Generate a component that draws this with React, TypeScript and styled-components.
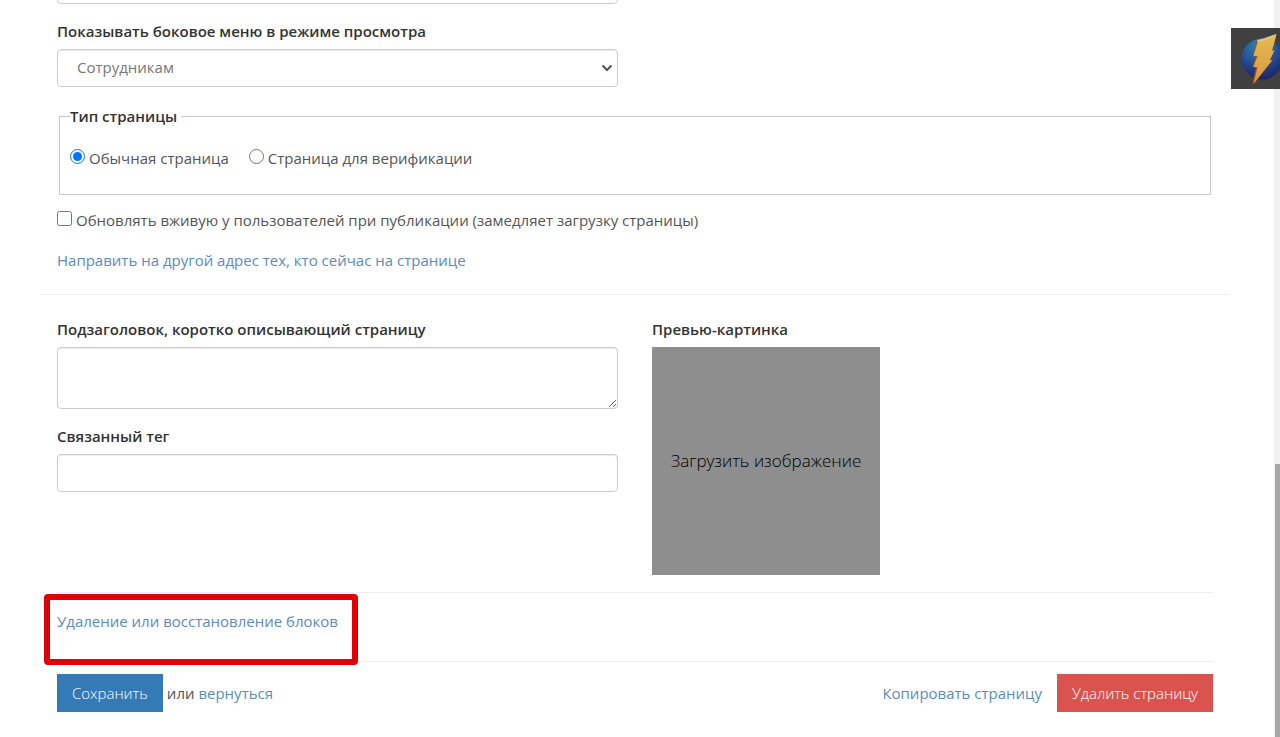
import React from "react";
import styled, { createGlobalStyle } from "styled-components";

const GlobalStyle = createGlobalStyle`
  *, *::before, *::after { box-sizing: border-box; }
  body {
    margin: 0;
    background: #fff;
    color: #555;
    font-family: "Open Sans", "Noto Sans", sans-serif;
    font-size: 15px;
    font-weight: 400;
    line-height: 22px;
  }
  button, input, select, textarea { font: inherit; color: inherit; }
`;

const Shell = styled.div`
  display: grid;
  grid-template-columns: minmax(0, 1fr) 6px;
  min-height: 100vh;
`;

const Page = styled.form`
  padding: 0 44px 24px 40px;
`;

const Section = styled.section`
  padding: 0 17px;
`;

const Columns = styled.div`
  display: grid;
  grid-template-columns: 1fr 1fr;
  column-gap: 34px;
`;

const Field = styled.div`
  display: flex;
  flex-direction: column;

  & + & { margin-top: 16px; }
`;

const Label = styled.label`
  font-weight: 600;
  color: #333;
  margin-bottom: 7px;
`;

const controlStyle = `
  width: 100%;
  border: 1px solid #ccc;
  border-radius: 4px;
  background: #fff;
  box-shadow: inset 0 1px 1px rgba(0, 0, 0, 0.075);
`;

const TextInput = styled.input`
  ${controlStyle}
  height: 38px;
  padding: 6px 15px;
`;

const TextArea = styled.textarea`
  ${controlStyle}
  display: block;
  height: 62px;
  padding: 6px 15px;
  resize: vertical;
`;

const ScrolledField = styled.div`
  display: flex;
  align-items: flex-end;
  height: 4px;
  margin-bottom: 16px;
  overflow: hidden;

  ${TextInput} { flex-shrink: 0; }
`;

const SelectBox = styled.div`
  display: grid;
  align-items: center;

  & > * { grid-area: 1 / 1; }
  & > svg {
    justify-self: end;
    margin-right: 5px;
    pointer-events: none;
  }
`;

const Select = styled.select`
  ${controlStyle}
  appearance: none;
  height: 38px;
  padding: 0 32px 2px 19px;
  color: #777;
`;

const Fieldset = styled.fieldset`
  margin: 18px 2px 14px;
  padding: 20px 10px 25px;
  border: 1px solid #c8c8c8;
`;

const Legend = styled.legend`
  padding: 0 4px 0 0;
  font-weight: 600;
  color: #333;
`;

const Options = styled.div`
  display: flex;
  gap: 20px;
`;

const Choice = styled.label`
  display: flex;
  align-items: flex-start;
  gap: 4px;

  input {
    width: 15px;
    height: 15px;
    margin: 2px 0 0;
  }
`;

const Link = styled.a`
  color: #5b8cbb;
  text-decoration: none;
`;

const RedirectRow = styled.div`
  margin-top: 18px;
`;

const Divider = styled.hr<{ $top: number; $bottom: number }>`
  height: 1px;
  margin: ${(p) => p.$top}px 0 ${(p) => p.$bottom}px;
  border: 0;
  background: #eee;
`;

const Upload = styled.button`
  width: 228px;
  height: 228px;
  padding: 0;
  border: 0;
  background: #8e8e8e;
  color: #000;
  font-size: 17px;
  font-weight: 300;
`;

const BlocksRow = styled.div`
  position: relative;
`;

const Highlight = styled.span`
  position: absolute;
  top: -16px;
  left: -13px;
  width: 314px;
  height: 71px;
  border: 6px solid #e00008;
  border-radius: 4px;
  pointer-events: none;
`;

const Footer = styled.footer`
  display: flex;
  justify-content: space-between;
  align-items: center;
`;

const Actions = styled.div<{ $gap: number }>`
  display: flex;
  align-items: center;
  gap: ${(p) => p.$gap}px;
`;

const Button = styled.button<{ $color: string }>`
  height: 38px;
  padding: 0 15px;
  border: 0;
  background: ${(p) => p.$color};
  color: #fff;
  font-weight: 300;
`;

const ScrollTrack = styled.div`
  display: flex;
  align-items: flex-end;
  justify-content: flex-end;
  background: #f1f1f1;
`;

const ScrollThumb = styled.div`
  width: 5px;
  height: 37%;
  background: #a8a8a8;
`;

const BoltButton = styled.button`
  position: fixed;
  top: 28px;
  right: 0;
  width: 49px;
  height: 61px;
  padding: 0;
  border: 0;
  background: #404040;

  svg { display: block; }
`;

function Chevron() {
  return (
    <svg width="12" height="8" viewBox="0 0 12 8" fill="none" aria-hidden="true">
      <path d="M1.5 1.5 6 6l4.500-4.500" stroke="#555" strokeWidth="2" />
    </svg>
  );
}

function Bolt() {
  return (
    <svg width="49" height="61" viewBox="0 0 49 61" aria-hidden="true">
      <defs>
        <radialGradient id="globe" cx="0.42" cy="0.15" r="0.85">
          <stop offset="0" stopColor="#2f87a8" />
          <stop offset="0.5" stopColor="#25549a" />
          <stop offset="1" stopColor="#1f2464" />
        </radialGradient>
        <linearGradient id="bolt" x1="0" y1="0" x2="0" y2="1">
          <stop offset="0" stopColor="#e3bb55" />
          <stop offset="1" stopColor="#d99a3c" />
        </linearGradient>
      </defs>
      <circle cx="31" cy="31" r="20.500" fill="url(#globe)" />
      <path d="M26 12 45.500 6 41 22 43.500 21.500 39 32 42 31.500 23 56 21.500 54.500 25 39.500 21.500 39 25 28 21.500 28.500Z" fill="#a8502b" />
      <path d="M27 13 45.500 6.500 41 23 43.500 22.500 38.500 32.500 41.500 32 23 55 26.500 39 22.500 39 26.500 28 22.500 28Z" fill="url(#bolt)" />
      <path d="M26 12 33 10.500 45 6 43 9 27 14Z" fill="#d6c9a0" />
    </svg>
  );
}

export default function App() {
  return (
    <>
      <GlobalStyle />
      <Shell>
        <Page onSubmit={(e) => e.preventDefault()}>
          <Section>
            <Columns>
              <div>
                <ScrolledField>
                  <TextInput aria-label="Адрес страницы" />
                </ScrolledField>
                <Field>
                  <Label htmlFor="menu">Показывать боковое меню в режиме просмотра</Label>
                  <SelectBox>
                    <Select id="menu" defaultValue="staff">
                      <option value="staff">Сотрудникам</option>
                    </Select>
                    <Chevron />
                  </SelectBox>
                </Field>
              </div>
            </Columns>
            <Fieldset>
              <Legend>Тип страницы</Legend>
              <Options>
                <Choice>
                  <input type="radio" name="kind" defaultChecked />
                  Обычная страница
                </Choice>
                <Choice>
                  <input type="radio" name="kind" />
                  Страница для верификации
                </Choice>
              </Options>
            </Fieldset>
            <Choice>
              <input type="checkbox" />
              Обновлять вживую у пользователей при публикации (замедляет загрузку страницы)
            </Choice>
            <RedirectRow>
              <Link href="#redirect">Направить на другой адрес тех, кто сейчас на странице</Link>
            </RedirectRow>
          </Section>
          <Divider $top={23} $bottom={23} />
          <Section>
            <Columns>
              <div>
                <Field>
                  <Label htmlFor="subtitle">Подзаголовок, коротко описывающий страницу</Label>
                  <TextArea id="subtitle" />
                </Field>
                <Field>
                  <Label htmlFor="tag">Связанный тег</Label>
                  <TextInput id="tag" />
                </Field>
              </div>
              <Field>
                <Label htmlFor="preview">Превью-картинка</Label>
                <Upload id="preview" type="button">Загрузить изображение</Upload>
              </Field>
            </Columns>
            <Divider $top={17} $bottom={17} />
            <BlocksRow>
              <Link href="#blocks">Удаление или восстановление блоков</Link>
              <Highlight />
            </BlocksRow>
            <Divider $top={29} $bottom={12} />
            <Footer>
              <Actions $gap={4}>
                <Button type="submit" $color="#337ab7">Сохранить</Button>
                <span>
                  или <Link href="#back">вернуться</Link>
                </span>
              </Actions>
              <Actions $gap={15}>
                <Link href="#copy">Копировать страницу</Link>
                <Button type="button" $color="#d9534f">Удалить страницу</Button>
              </Actions>
            </Footer>
          </Section>
        </Page>
        <ScrollTrack>
          <ScrollThumb />
        </ScrollTrack>
      </Shell>
      <BoltButton type="button" aria-label="Быстрые действия">
        <Bolt />
      </BoltButton>
    </>
  );
}
